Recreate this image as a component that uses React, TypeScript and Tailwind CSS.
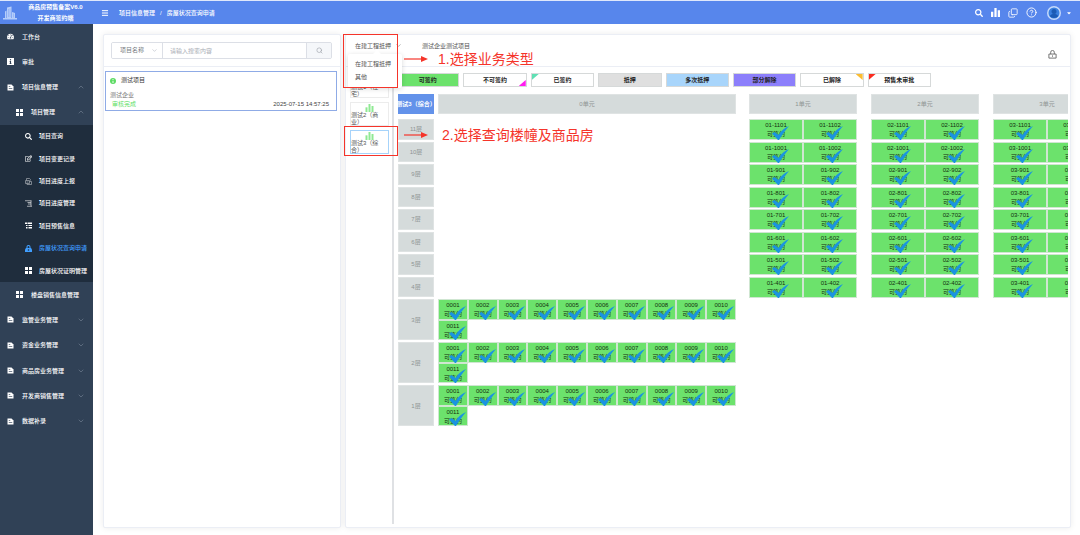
import React from "react";
import {
  FaTachometerAlt,
  FaInfo,
  FaSearch,
  FaRegEdit,
  FaCaretDown,
} from "react-icons/fa";
import { ChevronDown, ChevronUp, Search, Copy, CircleHelp, Menu } from "lucide-react";

type Entry = { label: string; icon: React.ReactNode; arrow?: "up" | "down"; level?: number; active?: boolean };

const GridIcon = () => (
  <svg viewBox="0 0 14 14" className="h-full w-full" fill="currentColor">
    <rect x="0" y="0" width="6" height="6" />
    <rect x="8" y="0" width="6" height="6" />
    <rect x="0" y="8" width="6" height="6" />
    <rect x="8" y="8" width="6" height="6" />
  </svg>
);

const DocIcon = () => (
  <svg viewBox="0 0 14 14" className="h-full w-full">
    <path d="M1 1h8l4 4v8H1z" fill="currentColor" />
    <path d="M3.500 5h3M3.500 9h7" stroke="#304156" strokeWidth="1.300" />
  </svg>
);

const InfoBox = () => (
  <span className="flex h-full w-full items-center justify-center bg-white text-[#304156]">
    <FaInfo className="h-[5px] w-[5px]" />
  </span>
);

const TreeIcon = () => (
  <svg viewBox="0 0 14 14" className="h-full w-full" fill="currentColor">
    <path d="M0 1h5v3H0zM6 1h8v3H6zM2 6h3v2H2zM7 6h7v2H7zM2 10h3v3H2zM7 10h7v3H7z" />
  </svg>
);

const ReportIcon = () => (
  <svg viewBox="0 0 14 14" className="h-full w-full opacity-60" fill="none" stroke="currentColor" strokeWidth="1.400">
    <path d="M3 5V1h6l2 2v2M1 11V5h8v6zM9 7h4v6H4v-2M3 8h4" />
  </svg>
);

const ProgressIcon = () => (
  <svg viewBox="0 0 14 14" className="h-full w-full opacity-80" fill="none" stroke="currentColor" strokeWidth="1.500">
    <path d="M0 1.500h13M5 5h7M6 8h6M4 12.500h10M12 1.500v11" />
  </svg>
);

const PadlockIcon = () => (
  <svg viewBox="0 0 14 14" className="h-full w-full">
    <path d="M4 7V4a3 3 0 0 1 6 0v3" fill="none" stroke="currentColor" strokeWidth="2.200" />
    <path d="M2 6h10l2 3v5H0V9z" fill="currentColor" />
    <circle cx="7" cy="10" r="1.600" fill="#1f2d3d" />
  </svg>
);

const BarsIcon = () => (
  <svg viewBox="0 0 12 12" className="h-full w-full" fill="currentColor">
    <rect x="0" y="5" width="3" height="7" />
    <rect x="4.500" y="0" width="3" height="12" />
    <rect x="9" y="3" width="3" height="9" />
  </svg>
);

const topEntries: Entry[] = [
  { label: "工作台", icon: <FaTachometerAlt className="h-full w-full" /> },
  { label: "审批", icon: <InfoBox /> },
  { label: "项目信息管理", icon: <DocIcon />, arrow: "up" },
  { label: "项目管理", icon: <GridIcon />, arrow: "up", level: 2 },
];

const subEntries: Entry[] = [
  { label: "项目查询", icon: <FaSearch className="h-full w-full" /> },
  { label: "项目变更记录", icon: <FaRegEdit className="h-full w-full" /> },
  { label: "项目进度上报", icon: <ReportIcon /> },
  { label: "项目进度管理", icon: <ProgressIcon /> },
  { label: "项目预售信息", icon: <TreeIcon /> },
  { label: "房屋状况查询申请", icon: <PadlockIcon />, active: true },
  { label: "房屋状况证明管理", icon: <GridIcon /> },
];

const bottomEntries: Entry[] = [
  { label: "楼盘销售信息管理", icon: <GridIcon />, level: 2 },
  { label: "监管业务管理", icon: <DocIcon />, arrow: "down" },
  { label: "资金业务管理", icon: <DocIcon />, arrow: "down" },
  { label: "商品房业务管理", icon: <DocIcon />, arrow: "down" },
  { label: "开发商销售管理", icon: <DocIcon />, arrow: "down" },
  { label: "数据补录", icon: <DocIcon />, arrow: "down" },
];

function NavItem({ item, sub }: { item: Entry; sub?: boolean }) {
  const pad = sub ? "pl-[25px]" : item.level === 2 ? "pl-4" : "pl-[7px]";
  return (
    <li className="flex min-w-0">
      <a
        href="#"
        className={`flex w-full items-center whitespace-nowrap pr-2 ${pad} ${item.active ? "text-[#409eff]" : "text-white"}`}
      >
        <span className={`h-[7px] w-[7px] shrink-0 ${sub ? "mr-[7px]" : "mr-2"}`}>{item.icon}</span>
        <span>{item.label}</span>
        {item.arrow === "up" && <ChevronUp className="ml-auto h-2 w-2 text-[#8794a5]" strokeWidth={1.5} />}
        {item.arrow === "down" && <ChevronDown className="ml-auto h-2 w-2 text-[#8794a5]" strokeWidth={1.5} />}
      </a>
    </li>
  );
}

const legends = [
  { label: "可签约", bg: "bg-[#6ce26c]", corner: "" },
  { label: "不可签约", bg: "bg-white", corner: "right-0 bottom-0 bg-[#ff1cf0] [clip-path:polygon(100%_0,100%_100%,0_100%)]" },
  { label: "已签约", bg: "bg-white", corner: "left-0 top-0 bg-[#5fe0b4] [clip-path:polygon(0_0,100%_0,0_100%)]" },
  { label: "抵押", bg: "bg-[#dfdfdf]", corner: "" },
  { label: "多次抵押", bg: "bg-[#a8d5fb]", corner: "" },
  { label: "部分解除", bg: "bg-[#8c7ffb]", corner: "" },
  { label: "已解除", bg: "bg-white", corner: "right-0 top-0 bg-[#fbbc30] [clip-path:polygon(0_0,100%_0,100%_100%)]" },
  { label: "预售未审批", bg: "bg-white", corner: "left-0 top-0 bg-[#fb2c20] [clip-path:polygon(0_0,100%_0,0_100%)]" },
];

const upperFloors = [11, 10, 9, 8, 7, 6, 5, 4];
const lowerFloors = [3, 2, 1];
const units = ["01", "02", "03"];
const shops = ["0001", "0002", "0003", "0004", "0005", "0006", "0007", "0008", "0009", "0010", "0011"];

function Room({ code }: { code: string }) {
  return (
    <button
      type="button"
      className="relative block min-w-0 border border-[#cfe6d1] bg-[#6ce26c] pt-px text-center leading-[9px] text-[#12300f]"
    >
      <span className="block">{code}</span>
      <span className="block">可签约</span>
      <svg viewBox="0 0 34 28" className="absolute -bottom-px left-1/2 -ml-1 h-[14px] w-[17px]" fill="#1b94e0">
        <path d="M0 15l5-3 8 6C18 10 26 3 34 0 27 8 20 18 14 28h-2z" />
      </svg>
    </button>
  );
}

function FloorLabel({ text }: { text: string }) {
  return (
    <div className="flex w-9 shrink-0 items-center justify-center border border-[#dfe3e3] bg-[#d5dbdb] text-[#8e9494]">
      {text}
    </div>
  );
}

function Header() {
  return (
    <header className="flex h-6 items-center border-t border-[#dfe8fb] bg-[#5786ec] text-white">
      <div className="flex h-full w-[93px] shrink-0 items-center pl-[3px]">
        <svg viewBox="0 0 28 28" className="h-[14px] w-[14px] shrink-0" fill="#b5cdfa">
          <path d="M4 24V11l3-2v15zM8 24V3l9-2v23zM18 24V12l6 2v10zM0 24h28v3H0z" />
          <path d="M11 6v16M14 5v17M21 15v8" stroke="#7ca3f2" strokeWidth="1" />
        </svg>
        <div className="flex-1 pl-[6px] pr-[5px] text-center font-bold leading-[11px]">
          <div className="whitespace-nowrap">商品房预售备案V6.0</div>
          <div>开发商签约端</div>
        </div>
      </div>
      <button type="button" aria-label="折叠菜单" className="ml-2">
        <Menu className="h-2 w-2" strokeWidth={3} />
      </button>
      <nav className="ml-[10px] flex gap-[5px] font-medium">
        <a href="#">项目信息管理</a>
        <span>/</span>
        <a href="#">房屋状况查询申请</a>
      </nav>
      <div className="ml-auto flex items-center gap-2 pr-2">
        <button type="button" aria-label="搜索"><FaSearch className="h-2 w-2" /></button>
        <button type="button" aria-label="统计" className="h-[9px] w-[9px]"><BarsIcon /></button>
        <button type="button" aria-label="窗口"><Copy className="h-[10px] w-[10px] -scale-y-100" strokeWidth={2} /></button>
        <button type="button" aria-label="帮助"><CircleHelp className="h-[11px] w-[11px]" strokeWidth={2} /></button>
        <button type="button" aria-label="用户" className="ml-[2px] flex items-center gap-[5px]">
          <svg viewBox="0 0 28 28" className="h-[14px] w-[14px]">
            <circle cx="14" cy="14" r="12.500" fill="#3a80e0" stroke="#c6dafb" strokeWidth="3" />
            <circle cx="14" cy="11" r="5" fill="#1c5bb5" />
            <path d="M5 20q9-9 18 0-9 8-18 0z" fill="#1c5bb5" />
          </svg>
          <FaCaretDown className="h-[6px] w-[6px]" />
        </button>
      </div>
    </header>
  );
}

function Sidebar() {
  return (
    <aside className="w-[93px] shrink-0 bg-[#304156] font-medium">
      <ul className="grid h-[101px] auto-rows-fr">
        {topEntries.map((e) => <NavItem key={e.label} item={e} />)}
      </ul>
      <ul className="grid h-[157px] auto-rows-fr bg-[#1f2d3d]">
        {subEntries.map((e) => <NavItem key={e.label} item={e} sub />)}
      </ul>
      <ul className="grid h-[152px] auto-rows-fr">
        {bottomEntries.map((e) => <NavItem key={e.label} item={e} />)}
      </ul>
    </aside>
  );
}

function ProjectPanel() {
  return (
    <section className="w-[238px] shrink-0 rounded-[2px] border border-[#ebeef5] bg-white shadow-[0_0_6px_rgba(0,0,0,0.08)]">
      <form className="flex h-8 items-center border-b border-[#ebeef5] pl-[7px] pr-2">
        <div className="flex h-[17px] w-full overflow-hidden rounded-[2px] border border-[#dcdfe6]">
          <label className="relative flex w-[51px] items-center border-r border-[#dcdfe6]">
            <span className="sr-only">搜索字段</span>
            <select className="h-full w-full appearance-none bg-white pl-2 leading-[15px] text-[#777b82] outline-none">
              <option>项目名称</option>
            </select>
            <ChevronDown className="pointer-events-none absolute right-1 h-[7px] w-[7px] text-[#b5b9c2]" strokeWidth={2} />
          </label>
          <input
            aria-label="搜索内容"
            placeholder="请输入搜索内容"
            className="min-w-0 flex-1 px-[7px] outline-none placeholder:text-[#a9adb5]"
          />
          <button type="button" aria-label="搜索" className="flex w-[25px] items-center justify-center border-l border-[#dcdfe6] bg-[#f5f7fa] text-[#989ca5]">
            <Search className="h-[7px] w-[7px]" strokeWidth={2} />
          </button>
        </div>
      </form>
      <article className="ml-px mr-[3px] mt-1 h-10 border border-[#8fabe6] px-1 pt-1">
        <h2 className="flex items-center gap-[5px] leading-[9px] text-[#333]">
          <svg viewBox="0 0 12 12" className="h-[6px] w-[6px]">
            <circle cx="6" cy="6" r="6" fill="#5cdb63" />
            <path d="M6 2v2M6 5.500v4.500" stroke="#fff" strokeWidth="1.800" />
          </svg>
          测试项目
        </h2>
        <p className="mt-[6px] leading-[9px] text-[#777]">测试企业</p>
        <div className="flex justify-between pl-[2px] pr-[3px] leading-[9px]">
          <span className="text-[#5fe068]">审核完成</span>
          <time className="text-[#444]">2025-07-15 14:57:25</time>
        </div>
      </article>
    </section>
  );
}

function Arrow() {
  return (
    <svg viewBox="0 0 24 8" className="h-2 w-6 shrink-0">
      <path d="M0 4h19" stroke="#f5342a" strokeWidth="1.200" />
      <path d="M17 1l7 3-7 3z" fill="#f5342a" />
    </svg>
  );
}

function BuildingTab({ name, active }: { name: string; active?: boolean }) {
  return (
    <button
      type="button"
      className={`flex h-6 w-full flex-col items-center border pt-px text-[#555] ${active ? "border-[#a6d3fa]" : "border-[#ececec]"}`}
    >
      <span className="h-2 w-[9px] shrink-0 text-[#8fe993]"><BarsIcon /></span>
      <span className="w-full pr-[5px] text-left leading-[7px]">{name}</span>
    </button>
  );
}

function BuildingPanel() {
  return (
    <section className="relative flex min-w-0 flex-1 flex-col rounded-[2px] border border-[#ebeef5] bg-white shadow-[0_0_6px_rgba(0,0,0,0.08)]">
      <div className="flex h-8 shrink-0 items-center border-b border-[#ebeef5] pl-[9px] pr-[13px] text-[#555]">
        <button type="button" className="-mt-[10px] flex items-center gap-1">
          在建工程抵押
          <ChevronDown className="h-[7px] w-[7px]" strokeWidth={1.5} />
        </button>
        <h1 className="-mt-[10px] ml-5">测试企业测试项目</h1>
        <button type="button" aria-label="锁定" className="ml-auto mt-2">
          <svg viewBox="0 0 20 20" className="h-[9px] w-[9px]" fill="none" stroke="#666" strokeWidth="2">
            <path d="M2 9h16v9H2zM6 9V5a4 4 0 0 1 8 0v4M10 12v3" />
          </svg>
        </button>
      </div>

      <div className="flex min-h-0 flex-1 pb-[3px] pr-[2px]">
        <div className="flex w-12 shrink-0 flex-col gap-1 border-r-2 border-[#dfe1e4] pl-1 pr-[3px] pt-[7px]">
          <BuildingTab name="测试1（住宅）" />
          <BuildingTab name="测试2（商业）" />
          <BuildingTab name="测试3（综合）" active />
        </div>

        <div className="min-w-0 flex-1 overflow-hidden pl-[2px] pt-[6px]">
          <ul className="grid w-[535px] grid-cols-8 gap-1 font-bold text-[#222]">
            {legends.map((l) => (
              <li key={l.label} className={`relative flex h-[14px] items-center justify-center border border-[#d6d9d9] ${l.bg}`}>
                {l.label}
                {l.corner && <i className={`absolute h-[6px] w-[7px] ${l.corner}`} />}
              </li>
            ))}
          </ul>

          <div className="ml-[2px] mt-[7px] w-max">
            <div className="flex h-5">
              <div className="flex w-9 items-center justify-center overflow-hidden whitespace-nowrap bg-[#6392ea] font-bold text-white">
                测试3（综合）
              </div>
              <div className="ml-1 mr-[13px] flex w-[298px] items-center justify-center border border-[#dfe3e3] bg-[#d5dbdb] text-[#8e9494]">0单元</div>
              {units.map((u) => (
                <div key={u} className="mr-[14px] flex w-[108px] items-center justify-center border border-[#dfe3e3] bg-[#d5dbdb] text-[#8e9494]">
                  {Number(u)}单元
                </div>
              ))}
            </div>

            <div className="mt-[5px] grid h-[178px] auto-rows-fr gap-[2px]">
              {upperFloors.map((f) => (
                <div key={f} className="flex">
                  <FloorLabel text={`${f}层`} />
                  <div className="ml-1 mr-[13px] w-[298px]" />
                  {units.map((u) => (
                    <div key={u} className="mr-[14px] grid w-[108px] grid-cols-2">
                      <Room code={`${u}-${f}01`} />
                      <Room code={`${u}-${f}02`} />
                    </div>
                  ))}
                </div>
              ))}
            </div>

            <div className="mt-[2px] grid gap-[2px]">
              {lowerFloors.map((f) => (
                <div key={f} className="flex h-[41px]">
                  <FloorLabel text={`${f}层`} />
                  <div className="ml-1 grid w-[298px] auto-rows-fr grid-cols-10">
                    {shops.map((s) => <Room key={s} code={s} />)}
                  </div>
                </div>
              ))}
            </div>
          </div>
        </div>
      </div>

      <div className="absolute left-[2px] top-[19px] w-[54px] rounded-[2px] bg-white py-1 text-[#555] shadow-[0_1px_5px_rgba(0,0,0,0.15)]">
        <i className="absolute -top-1 left-[25px] h-0 w-0 border-x-4 border-b-4 border-x-transparent border-b-white" />
        <button type="button" className="block pl-[7px] leading-[13px]">在建工程抵押</button>
        <button type="button" className="block pl-[7px] leading-[13px]">其他</button>
      </div>

      <div className="pointer-events-none absolute -left-[3px] -top-px h-[54px] w-[55px] border border-[#f5342a]" />
      <div className="pointer-events-none absolute -left-[2px] top-[91px] h-[30px] w-[54px] border border-[#f5342a]" />
      <div className="pointer-events-none absolute left-[58px] top-[14px] flex items-center gap-[10px] whitespace-nowrap text-sm text-[#f5342a]">
        <Arrow />
        1.选择业务类型
      </div>
      <div className="pointer-events-none absolute left-[58px] top-[90px] flex items-center gap-[14px] whitespace-nowrap text-sm text-[#f5342a]">
        <Arrow />
        2.选择查询楼幢及商品房
      </div>
    </section>
  );
}

export default function App() {
  return (
    <div className="flex min-h-screen flex-col bg-white font-['Liberation_Sans','Noto_Sans_CJK_SC',sans-serif] text-[6px] leading-[8px]">
      <Header />
      <div className="flex flex-1">
        <Sidebar />
        <main className="flex min-w-0 flex-1 gap-1 pb-[7px] pl-[10px] pr-[9px] pt-[10px]">
          <ProjectPanel />
          <BuildingPanel />
        </main>
      </div>
    </div>
  );
}
